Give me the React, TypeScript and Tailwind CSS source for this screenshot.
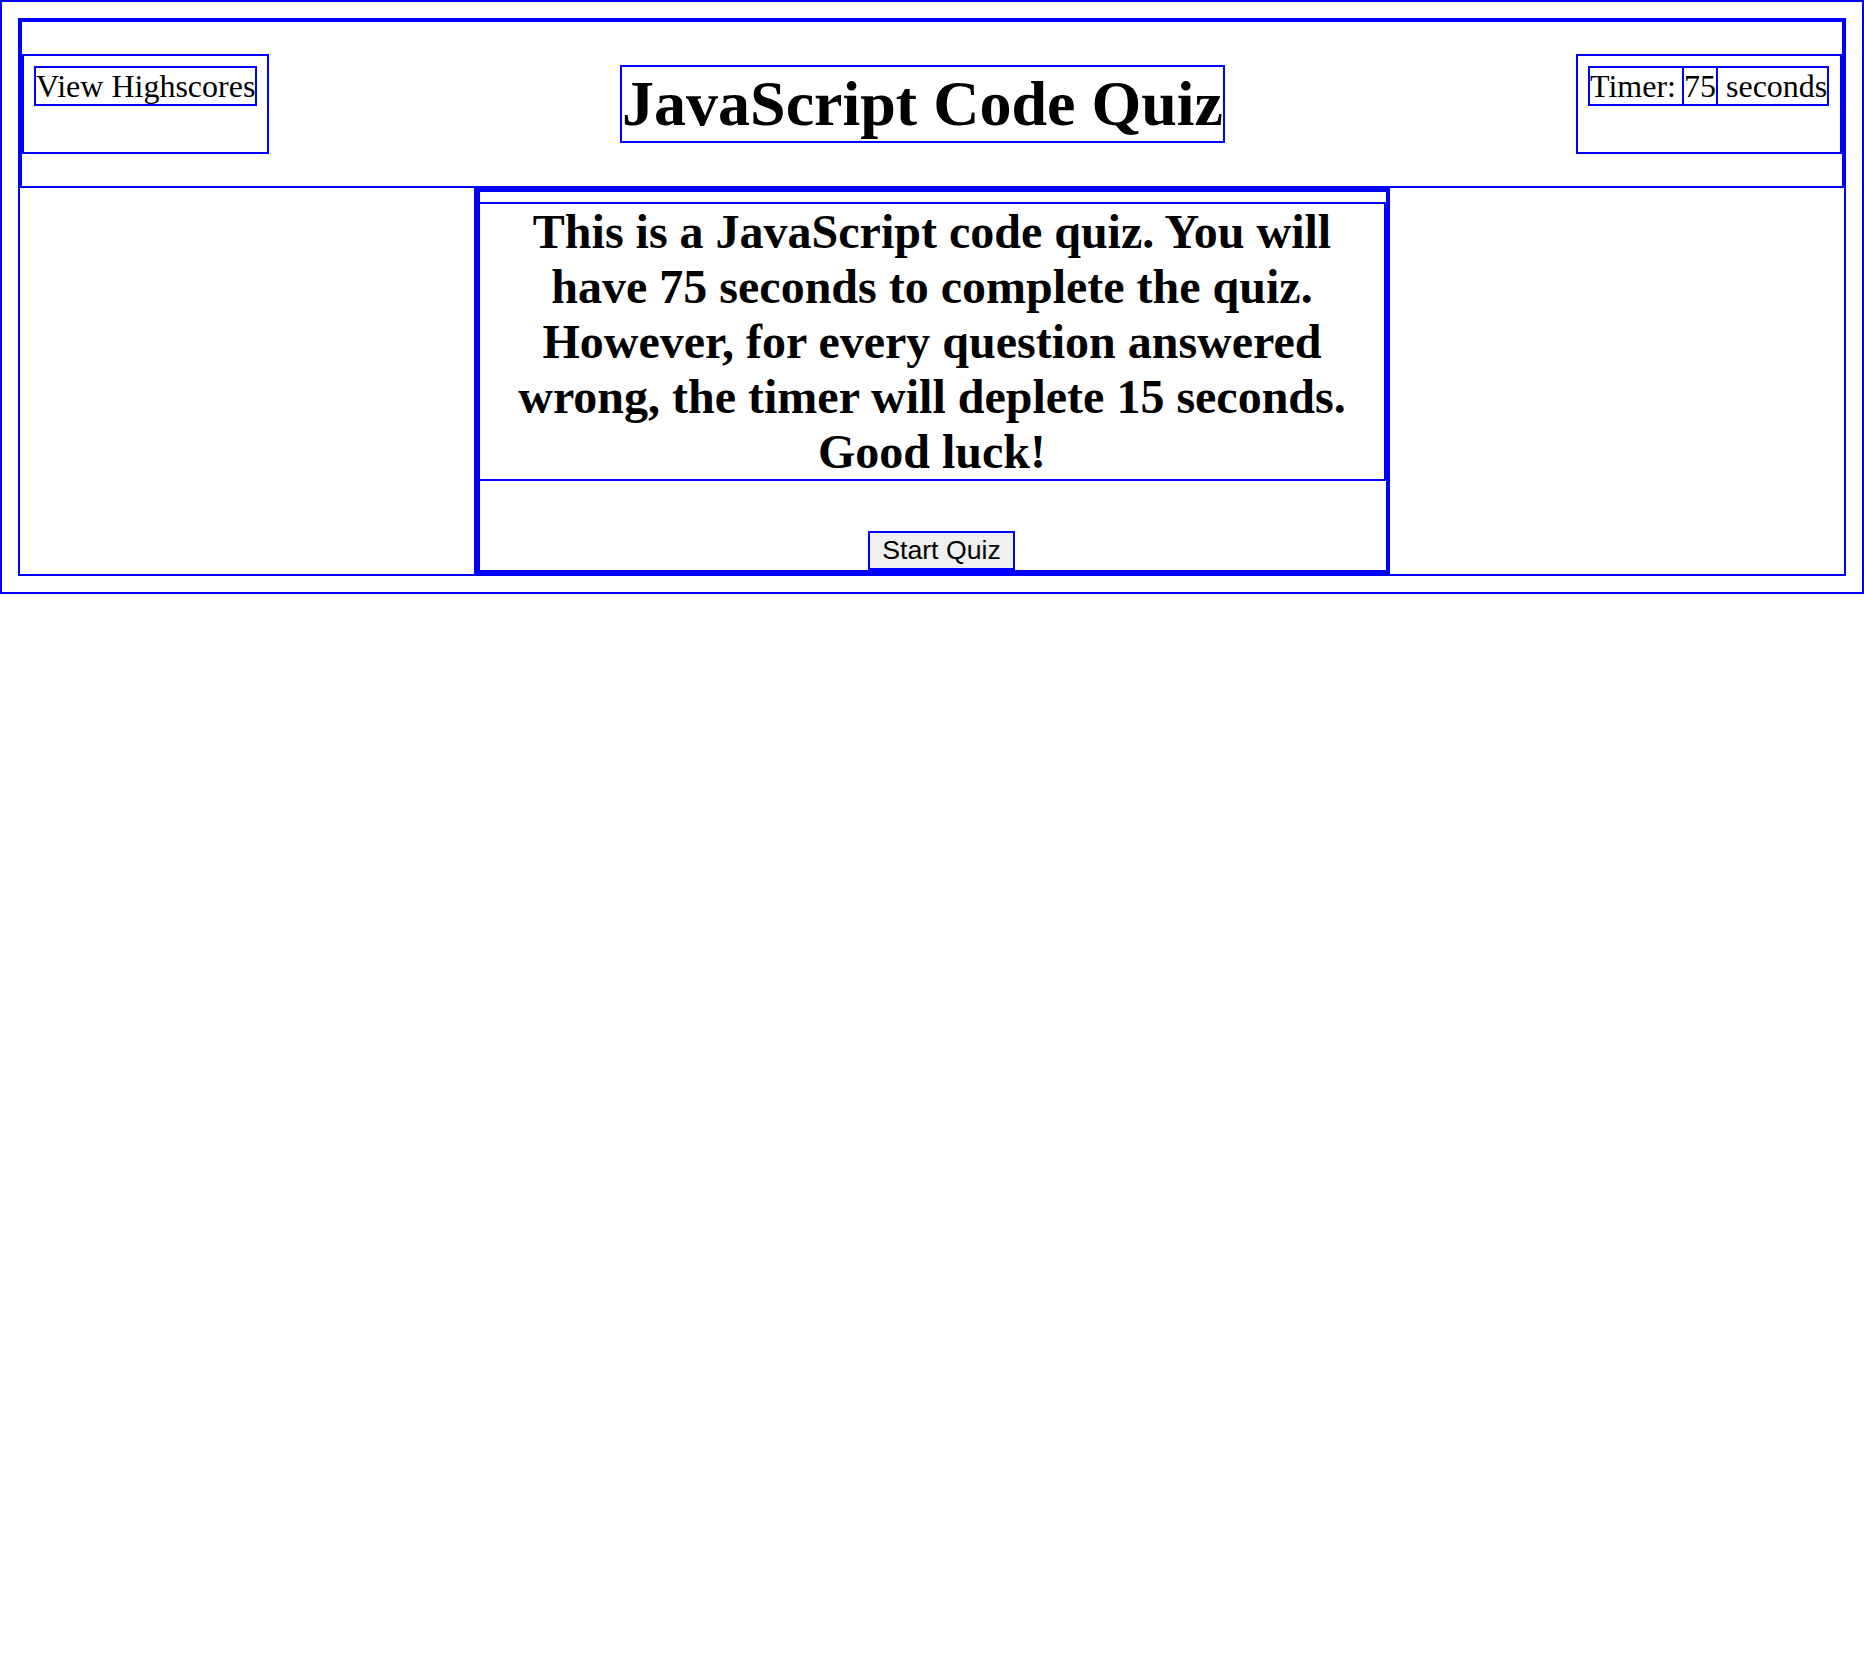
const SERIF = "font-['Liberation_Serif','Times_New_Roman',serif]";

function Header() {
  return (
    <header className="flex items-center justify-between border-2 border-[#0000ff] py-8">
      <div className="flex h-[100px] w-[247px] items-start border-2 border-[#0000ff] p-[10px]">
        <span className="whitespace-nowrap border-2 border-[#0000ff] text-[32px] leading-[36px]">
          View Highscores
        </span>
      </div>

      <h1 className="whitespace-nowrap border-2 border-[#0000ff] text-[64px] font-bold leading-[74px]">
        JavaScript Code Quiz
      </h1>

      <div className="flex h-[100px] w-[266px] items-start border-2 border-[#0000ff] p-[10px]">
        <div className="flex whitespace-nowrap text-[32px] leading-[36px]">
          <span className="w-[96px] border-2 border-[#0000ff]">Timer:</span>
          <span className="w-[34px] border-y-2 border-r-2 border-[#0000ff]">75</span>
          <span className="w-[111px] border-y-2 border-r-2 border-[#0000ff] pl-[8px]">seconds</span>
        </div>
      </div>
    </header>
  );
}

function Intro() {
  return (
    <section className="mx-auto w-[916px] border-x-4 border-b-2 border-t-4 border-[#0000ff]">
      <div className="border-b-2 border-l-2 border-[#0000ff] pt-[10px]">
        <h2 className="border-y-2 border-r-2 border-[#0000ff] text-center text-[48px] font-bold leading-[55px]">
          This is a JavaScript code quiz. You will have 75 seconds to complete the quiz.
          However, for every question answered wrong, the timer will deplete 15 seconds.
          Good luck!
        </h2>
        <div className="mt-[50px] flex justify-center">
          <button
            type="button"
            className="ml-[17px] flex h-[39px] w-[147px] items-center justify-center border-2 border-[#0000ff] bg-[#efefef] font-['Liberation_Sans',Arial,sans-serif] text-[26.67px] leading-none text-black"
          >
            Start Quiz
          </button>
        </div>
      </div>
    </section>
  );
}

export default function App() {
  return (
    <div className={`${SERIF} bg-white text-black`}>
      <div className="border-2 border-[#0000ff] p-4">
        <main className="border-2 border-[#0000ff]">
          <Header />
          <Intro />
        </main>
      </div>
    </div>
  );
}
